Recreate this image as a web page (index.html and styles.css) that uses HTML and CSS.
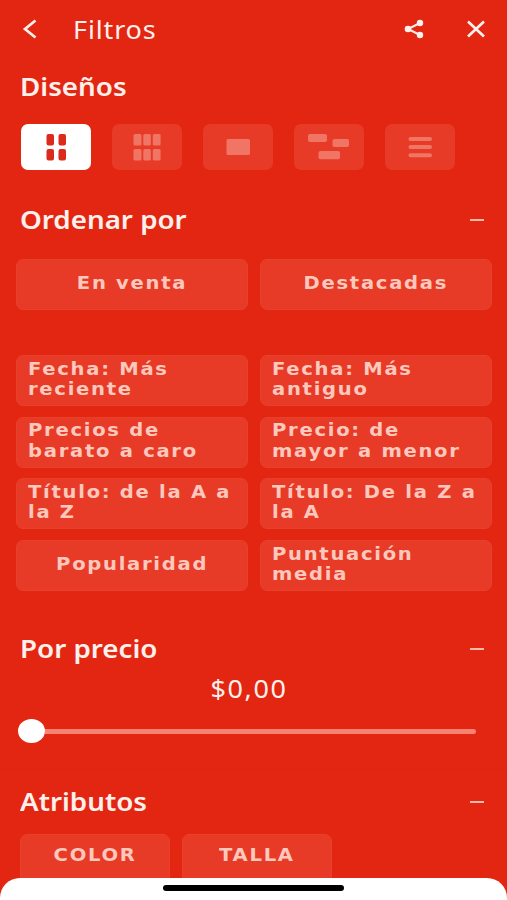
FILE: index.html
```html
<!DOCTYPE html>
<html lang="es">

<head>
  <meta charset="UTF-8">
  <title>Filtros</title>
  <link rel="stylesheet" href="styles.css">
</head>

<body>
  <header class="top-bar">
    <svg class="back-icon" width="16" height="22" viewBox="0 0 16 22"><path d="M13.5 2.5L3 11l10.5 8.5"/></svg>
    <h1><span>Filtros</span></h1>
    <svg class="share-icon" width="20" height="20" viewBox="0 0 20 20">
      <path d="M16 4L4 10l12 6"/>
      <circle cx="16" cy="4" r="3.2"/>
      <circle cx="4" cy="10" r="3.3"/>
      <circle cx="16" cy="16" r="3.2"/>
    </svg>
    <svg class="close-icon" width="20" height="20" viewBox="0 0 20 20"><path d="M2 2.5l16 15M18 2.5l-16 15"/></svg>
  </header>

  <section class="designs">
    <h2><span>Diseños</span></h2>
    <div class="design-list">
      <button class="design active">
        <svg width="70" height="46" viewBox="0 0 70 46">
          <rect x="25.5" y="10" width="7.5" height="11.5" rx="2"/>
          <rect x="37.5" y="10" width="7.5" height="11.5" rx="2"/>
          <rect x="25.5" y="25" width="7.5" height="11.5" rx="2"/>
          <rect x="37.5" y="25" width="7.5" height="11.5" rx="2"/>
        </svg>
      </button>
      <button class="design">
        <svg width="70" height="46" viewBox="0 0 70 46">
          <rect x="21.5" y="10" width="8" height="11.5" rx="1.5"/>
          <rect x="31.3" y="10" width="7.5" height="11.5" rx="1.5"/>
          <rect x="40.8" y="10" width="7.8" height="11.5" rx="1.5"/>
          <rect x="21.5" y="25" width="8" height="11.5" rx="1.5"/>
          <rect x="31.3" y="25" width="7.5" height="11.5" rx="1.5"/>
          <rect x="40.8" y="25" width="7.8" height="11.5" rx="1.5"/>
        </svg>
      </button>
      <button class="design">
        <svg width="70" height="46" viewBox="0 0 70 46"><rect x="23.5" y="15" width="23.5" height="16" rx="1.5"/></svg>
      </button>
      <button class="design">
        <svg width="70" height="46" viewBox="0 0 70 46">
          <rect x="14" y="10" width="19" height="8" rx="2"/>
          <rect x="38.5" y="15" width="16.5" height="8" rx="2"/>
          <rect x="24.5" y="27" width="21.5" height="8.3" rx="2"/>
        </svg>
      </button>
      <button class="design">
        <svg width="70" height="46" viewBox="0 0 70 46">
          <rect x="23.5" y="13" width="23.5" height="4" rx="2"/>
          <rect x="23.5" y="21" width="23.5" height="4" rx="2"/>
          <rect x="23.5" y="29.3" width="23.5" height="4" rx="2"/>
        </svg>
      </button>
    </div>
  </section>

  <section class="order">
    <h2><span>Ordenar por</span><i class="minus"></i></h2>
    <div class="options">
      <button class="option center"><span>En venta</span></button>
      <button class="option center"><span>Destacadas</span></button>
    </div>
    <div class="options sort">
      <button class="option"><span>Fecha: Más<br>reciente</span></button>
      <button class="option"><span>Fecha: Más<br>antiguo</span></button>
      <button class="option"><span>Precios de<br>barato a caro</span></button>
      <button class="option"><span>Precio: de<br>mayor a menor</span></button>
      <button class="option"><span>Título: de la A a<br>la Z</span></button>
      <button class="option"><span>Título: De la Z a<br>la A</span></button>
      <button class="option center"><span>Popularidad</span></button>
      <button class="option"><span>Puntuación<br>media</span></button>
    </div>
  </section>

  <section class="price">
    <h2><span>Por precio</span><i class="minus"></i></h2>
    <p class="amount">$0,00</p>
    <div class="slider">
      <span class="thumb"></span>
      <span class="track"></span>
    </div>
  </section>

  <section class="attributes">
    <h2><span>Atributos</span><i class="minus"></i></h2>
    <div class="attribute-list">
      <button class="option center attribute"><span>COLOR</span></button>
      <button class="option center attribute"><span>TALLA</span></button>
    </div>
  </section>

  <footer class="bottom-sheet">
    <span class="home-indicator"></span>
  </footer>
</body>

</html>
```
FILE: styles.css
```css
* {
  box-sizing: border-box;
}

body {
  position: relative;
  height: 900px;
  margin: 0;
  overflow: hidden;
  background-color: #e32611;
  color: #fff0ec;
  font-family: "Noto Sans", sans-serif;
}

h1, h2, p {
  margin: 0;
}

button {
  padding: 0;
  border: none;
}

.top-bar {
  display: flex;
  align-items: center;
  height: 58px;
  padding: 0 21px 0 22px;
}

.top-bar svg {
  fill: none;
  stroke: #fff0ec;
  stroke-width: 2.7;
}

.top-bar h1 {
  flex: 1;
  margin-left: 35px;
  padding-bottom: 1px;
  font-size: 25px;
  font-weight: 400;
  letter-spacing: 0.8px;
}

.top-bar .share-icon {
  margin-right: 42px;
  fill: #fff0ec;
  stroke-width: 2;
}

.share-icon path {
  fill: none;
}

.share-icon circle {
  stroke: none;
}

/* wide lettering */
h1 span, h2 span {
  display: inline-block;
  transform: scaleX(1.08);
  transform-origin: left;
}

h2 {
  display: flex;
  align-items: center;
  justify-content: space-between;
  height: 40px;
  padding: 0 23px 0 20px;
  font-size: 25px;
  font-weight: 600;
}

h2 span {
  padding-bottom: 2px;
  transform: scaleX(1.11);
}

.minus {
  width: 14px;
  height: 2px;
  background-color: #ffb9ac;
}

.designs {
  height: 142px;
  padding-top: 9px;
}

.design-list {
  display: flex;
  gap: 21px;
  padding: 17px 0 0 21px;
}

.design {
  width: 70px;
  height: 46px;
  border-radius: 7px;
  background-color: #e73b27;
}

.design svg {
  display: block;
  fill: #f17565;
}

.design.active {
  background-color: #fff;
}

.active svg {
  fill: #dc2a1b;
}

.options {
  display: grid;
  grid-template-columns: 232px 232px;
  gap: 10.7px 12px;
  margin: 19px 0 0 16px;
}

.sort {
  margin-top: 45px;
}

.option {
  height: 51px;
  padding: 0 0 3px 11px;
  border: 1px solid #e8402b;
  border-radius: 7px;
  background-color: #e73b27;
  color: #ffc8bd;
  font-family: "DejaVu Sans", sans-serif;
  font-size: 17px;
  font-weight: 700;
  letter-spacing: 1.5px;
  line-height: 20.5px;
  text-align: left;
  white-space: nowrap;
}

.option span {
  display: inline-block;
  transform: scaleX(1.15);
  transform-origin: left;
}

.center {
  padding: 0 0 3px;
  text-align: center;
}

.center span {
  transform-origin: center;
}

.price {
  height: 140px;
  margin-top: 38px;
}

.amount {
  height: 40px;
  margin-left: -9px;
  font-size: 25px;
  line-height: 39px;
  letter-spacing: 1.5px;
  text-align: center;
  transform: scaleX(1.08);
}

.slider {
  display: flex;
  align-items: center;
  height: 24px;
  margin: 10px 31px 0 18px;
}

.thumb {
  width: 27px;
  height: 24px;
  border-radius: 50%;
  background-color: #fff;
}

.track {
  flex: 1;
  height: 5px;
  border-radius: 0 3px 3px 0;
  background-color: #f98373;
}

.attributes {
  padding-top: 12px;
  border-top: 1px solid #dd2510;
}

.attribute-list {
  display: flex;
  gap: 12px;
  padding: 12px 0 0 20px;
}

.attribute {
  width: 150px;
  padding-bottom: 8px;
}

.bottom-sheet {
  position: absolute;
  right: 0;
  bottom: 0;
  left: 0;
  display: flex;
  justify-content: center;
  height: 22px;
  padding-top: 7px;
  border-radius: 20px 20px 0 0;
  background-color: #fff;
}

.home-indicator {
  width: 181px;
  height: 6px;
  border-radius: 3px;
  background-color: #000;
}
```
